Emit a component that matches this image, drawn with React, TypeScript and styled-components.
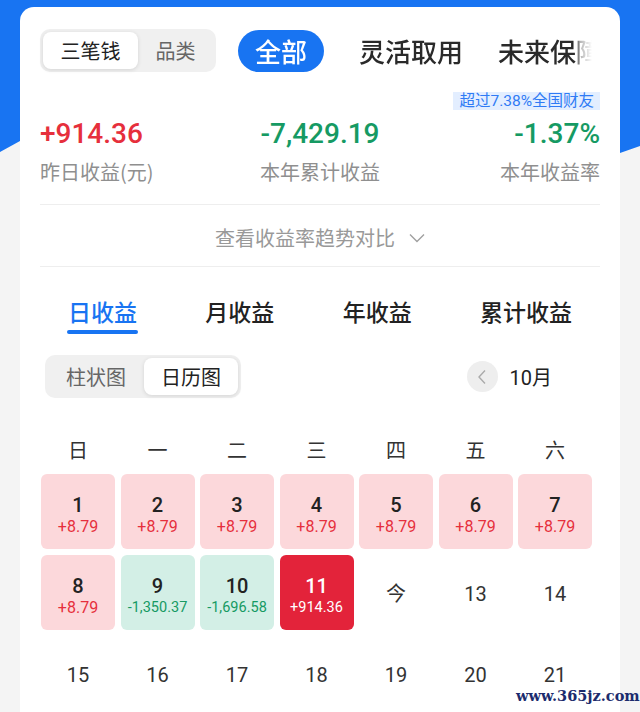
import React from "react";
import styled, { createGlobalStyle } from "styled-components";

const GlobalStyle = createGlobalStyle`
  html, body { margin: 0; padding: 0; }
  body {
    font-family: Roboto, "Noto Sans CJK SC", sans-serif;
    background: #f4f4f4;
  }
  * { box-sizing: border-box; }
`;

const BLUE = "#1874f2";
const RED = "#e62f3c";
const GREEN = "#169a63";

const Page = styled.div`
  position: relative;
  width: 640px;
  height: 712px;
  overflow: hidden;
  background: #f4f4f4;
  padding-top: 7px;
  &::before {
    content: "";
    position: absolute;
    left: 0;
    top: 0;
    right: 0;
    height: 160px;
    background: ${BLUE};
    clip-path: polygon(0 0, 100% 0, 100% 146px, 620px 153px, 20px 141px, 0 152px);
  }
`;

const Card = styled.div`
  position: relative;
  z-index: 1;
  margin: 0 20px;
  background: #fff;
  border-radius: 14px 14px 0 0;
  padding: 22px 20px 0;
  min-height: 760px;
`;

const TopRow = styled.div`
  display: flex;
  align-items: center;
  height: 43px;
`;

const Segmented = styled.div<{ $ml?: number }>`
  display: inline-flex;
  height: 43px;
  padding: 3px;
  background: #f0f0f0;
  border-radius: 10px;
  margin-left: ${(p) => p.$ml ?? 0}px;
  flex-shrink: 0;
`;

const Segment = styled.div<{ $active?: boolean; $w: number }>`
  width: ${(p) => p.$w}px;
  display: flex;
  align-items: center;
  justify-content: center;
  font-family: "Noto Sans CJK SC", sans-serif;
  font-size: 20px;
  color: ${(p) => (p.$active ? "#222" : "#666")};
  background: ${(p) => (p.$active ? "#fff" : "transparent")};
  border-radius: 8px;
  box-shadow: ${(p) => (p.$active ? "0 1px 4px rgba(0,0,0,0.12)" : "none")};
`;

const Scroller = styled.div`
  flex: 1;
  margin-left: 22px;
  margin-right: 8px;
  display: flex;
  align-items: center;
  gap: 35px;
  overflow: hidden;
  white-space: nowrap;
  -webkit-mask-image: linear-gradient(to right, #000 calc(100% - 16px), rgba(0,0,0,0.35) calc(100% - 12px), transparent);
  mask-image: linear-gradient(to right, #000 calc(100% - 16px), rgba(0,0,0,0.35) calc(100% - 12px), transparent);
`;

const Pill = styled.div`
  flex-shrink: 0;
  height: 42px;
  padding: 0 17px;
  border-radius: 21px;
  background: ${BLUE};
  color: #fff;
  display: flex;
  align-items: center;
  font-family: "Noto Sans CJK SC", sans-serif;
  font-size: 26px;
  font-weight: 500;
`;

const ScrollTab = styled.div`
  flex-shrink: 0;
  font-family: "Noto Sans CJK SC", sans-serif;
  font-size: 26px;
  font-weight: 500;
  color: #2a2a2a;
`;

const BadgeRow = styled.div`
  display: flex;
  justify-content: flex-end;
  margin-top: 20px;
`;

const Badge = styled.div`
  height: 18px;
  line-height: 18px;
  padding: 0 6px;
  background: #e3eeff;
  color: #2f7bf5;
  font-size: 15.5px;
  font-family: Roboto, "Noto Sans CJK SC", sans-serif;
`;

const StatsGrid = styled.div`
  display: grid;
  grid-template-columns: 1fr 1fr 1fr;
  margin-top: 7px;
`;

const Stat = styled.div<{ $align: "left" | "center" | "right" }>`
  display: flex;
  flex-direction: column;
  align-items: ${(p) =>
    p.$align === "left" ? "flex-start" : p.$align === "right" ? "flex-end" : "center"};
`;

const StatValue = styled.div<{ $color: string }>`
  font-family: Roboto, sans-serif;
  font-size: 28px;
  font-weight: 500;
  line-height: 34px;
  color: ${(p) => p.$color};
`;

const StatLabel = styled.div`
  margin-top: 8px;
  font-family: "Noto Sans CJK SC", sans-serif;
  font-size: 20px;
  line-height: 26px;
  color: #8f8f8f;
`;

const Divider = styled.div<{ $mt?: number }>`
  height: 1px;
  background: #eeeeee;
  margin-top: ${(p) => p.$mt ?? 0}px;
`;

const Expand = styled.div`
  display: flex;
  align-items: center;
  justify-content: center;
  gap: 14px;
  padding: 20px 0 15px;
  font-family: "Noto Sans CJK SC", sans-serif;
  font-size: 20px;
  line-height: 26px;
  color: #999;
`;

const Tabs = styled.div`
  display: flex;
  justify-content: space-between;
  padding: 29px 28px 0;
`;

const Tab = styled.div<{ $active?: boolean }>`
  display: flex;
  flex-direction: column;
  align-items: center;
  font-family: "Noto Sans CJK SC", sans-serif;
  font-size: 23px;
  font-weight: 500;
  line-height: 30px;
  color: ${(p) => (p.$active ? BLUE : "#222")};
`;

const Indicator = styled.div<{ $show?: boolean }>`
  align-self: stretch;
  margin: 4px -1px 0;
  height: 4px;
  border-radius: 2px;
  background: ${(p) => (p.$show ? BLUE : "transparent")};
`;

const ChartBar = styled.div`
  display: flex;
  align-items: center;
  justify-content: space-between;
  margin-top: 21px;
  padding-right: 48px;
`;

const MonthNav = styled.div`
  display: flex;
  align-items: center;
  gap: 12px;
`;

const CircleBtn = styled.div`
  width: 31px;
  height: 31px;
  border-radius: 50%;
  background: #eeeeee;
  display: flex;
  align-items: center;
  justify-content: center;
`;

const MonthLabel = styled.div`
  font-family: Roboto, "Noto Sans CJK SC", sans-serif;
  font-size: 20px;
  color: #222;
`;

const Week = styled.div`
  display: grid;
  grid-template-columns: repeat(7, 74px);
  column-gap: 5.5px;
  padding-left: 1px;
  margin-top: 39px;
`;

const WeekDay = styled.div`
  text-align: center;
  font-family: "Noto Sans CJK SC", sans-serif;
  font-size: 20px;
  line-height: 26px;
  color: #333;
`;

const Days = styled.div`
  display: grid;
  grid-template-columns: repeat(7, 74px);
  grid-auto-rows: 75px;
  column-gap: 5.5px;
  row-gap: 6px;
  padding-left: 1px;
  margin-top: 11px;
`;

type Tone = "up" | "down" | "today" | "none";

const DayCell = styled.div<{ $tone: Tone }>`
  display: flex;
  flex-direction: column;
  align-items: center;
  justify-content: center;
  padding-top: ${(p) => (p.$tone === "none" ? 2 : 8)}px;
  border-radius: 6px;
  background: ${(p) =>
    p.$tone === "up"
      ? "#fcd8db"
      : p.$tone === "down"
      ? "#d3efe6"
      : p.$tone === "today"
      ? "#e3233a"
      : "transparent"};
  color: ${(p) => (p.$tone === "today" ? "#fff" : "#222")};
`;

const DayNum = styled.div<{ $plain?: boolean }>`
  font-family: Roboto, "Noto Sans CJK SC", sans-serif;
  font-size: 20px;
  font-weight: ${(p) => (p.$plain ? 400 : 500)};
  line-height: 22px;
  color: ${(p) => (p.$plain ? "#333" : "inherit")};
`;

const DayValue = styled.div<{ $tone: Tone; $small?: boolean }>`
  font-family: Roboto, sans-serif;
  font-size: ${(p) => (p.$small ? 14.5 : 16)}px;
  line-height: 20px;
  margin-top: 1px;
  color: ${(p) =>
    p.$tone === "up" ? RED : p.$tone === "down" ? GREEN : p.$tone === "today" ? "#fff" : "#333"};
`;

const Watermark = styled.div`
  position: absolute;
  z-index: 2;
  left: 516px;
  top: 687px;
  font-family: "DejaVu Serif", serif;
  font-size: 14.5px;
  font-weight: 600;
  line-height: 18px;
  color: #1c2c6e;
`;

type Day = { label: string; value?: string; tone: Tone; small?: boolean };

const days: Day[] = [
  { label: "1", value: "+8.79", tone: "up" },
  { label: "2", value: "+8.79", tone: "up" },
  { label: "3", value: "+8.79", tone: "up" },
  { label: "4", value: "+8.79", tone: "up" },
  { label: "5", value: "+8.79", tone: "up" },
  { label: "6", value: "+8.79", tone: "up" },
  { label: "7", value: "+8.79", tone: "up" },
  { label: "8", value: "+8.79", tone: "up" },
  { label: "9", value: "-1,350.37", tone: "down", small: true },
  { label: "10", value: "-1,696.58", tone: "down", small: true },
  { label: "11", value: "+914.36", tone: "today", small: true },
  { label: "今", tone: "none" },
  { label: "13", tone: "none" },
  { label: "14", tone: "none" },
  { label: "15", tone: "none" },
  { label: "16", tone: "none" },
  { label: "17", tone: "none" },
  { label: "18", tone: "none" },
  { label: "19", tone: "none" },
  { label: "20", tone: "none" },
  { label: "21", tone: "none" },
];

const weekdays = ["日", "一", "二", "三", "四", "五", "六"];

export default function App() {
  return (
    <>
      <GlobalStyle />
      <Page>
        <Card>
          <TopRow>
            <Segmented>
              <Segment $active $w={95}>三笔钱</Segment>
              <Segment $w={75}>品类</Segment>
            </Segmented>
            <Scroller>
              <Pill>全部</Pill>
              <ScrollTab>灵活取用</ScrollTab>
              <ScrollTab>未来保障</ScrollTab>
            </Scroller>
          </TopRow>

          <BadgeRow>
            <Badge>超过7.38%全国财友</Badge>
          </BadgeRow>
          <StatsGrid>
            <Stat $align="left">
              <StatValue $color={RED}>+914.36</StatValue>
              <StatLabel>昨日收益(元)</StatLabel>
            </Stat>
            <Stat $align="center">
              <StatValue $color={GREEN}>-7,429.19</StatValue>
              <StatLabel>本年累计收益</StatLabel>
            </Stat>
            <Stat $align="right">
              <StatValue $color={GREEN}>-1.37%</StatValue>
              <StatLabel>本年收益率</StatLabel>
            </Stat>
          </StatsGrid>

          <Divider $mt={19} />
          <Expand>
            <span>查看收益率趋势对比</span>
            <svg width="16" height="10" viewBox="0 0 16 10">
              <path d="M1 1.5 L8 8.5 L15 1.5" fill="none" stroke="#a0a0a0" strokeWidth="1.4" />
            </svg>
          </Expand>
          <Divider />

          <Tabs>
            <Tab $active>
              日收益
              <Indicator $show />
            </Tab>
            <Tab>
              月收益
              <Indicator />
            </Tab>
            <Tab>
              年收益
              <Indicator />
            </Tab>
            <Tab>
              累计收益
              <Indicator />
            </Tab>
          </Tabs>

          <ChartBar>
            <Segmented $ml={5}>
              <Segment $w={96}>柱状图</Segment>
              <Segment $active $w={94}>日历图</Segment>
            </Segmented>
            <MonthNav>
              <CircleBtn>
                <svg width="10" height="16" viewBox="0 0 10 16">
                  <path d="M8 1.5 L2 8 L8 14.5" fill="none" stroke="#aaa" strokeWidth="1.4" />
                </svg>
              </CircleBtn>
              <MonthLabel>10月</MonthLabel>
            </MonthNav>
          </ChartBar>

          <Week>
            {weekdays.map((w) => (
              <WeekDay key={w}>{w}</WeekDay>
            ))}
          </Week>
          <Days>
            {days.map((d) => (
              <DayCell key={d.label} $tone={d.tone}>
                <DayNum $plain={d.tone === "none"}>{d.label}</DayNum>
                {d.value && (
                  <DayValue $tone={d.tone} $small={d.small}>
                    {d.value}
                  </DayValue>
                )}
              </DayCell>
            ))}
          </Days>
        </Card>
        <Watermark>www.365jz.com</Watermark>
      </Page>
    </>
  );
}
